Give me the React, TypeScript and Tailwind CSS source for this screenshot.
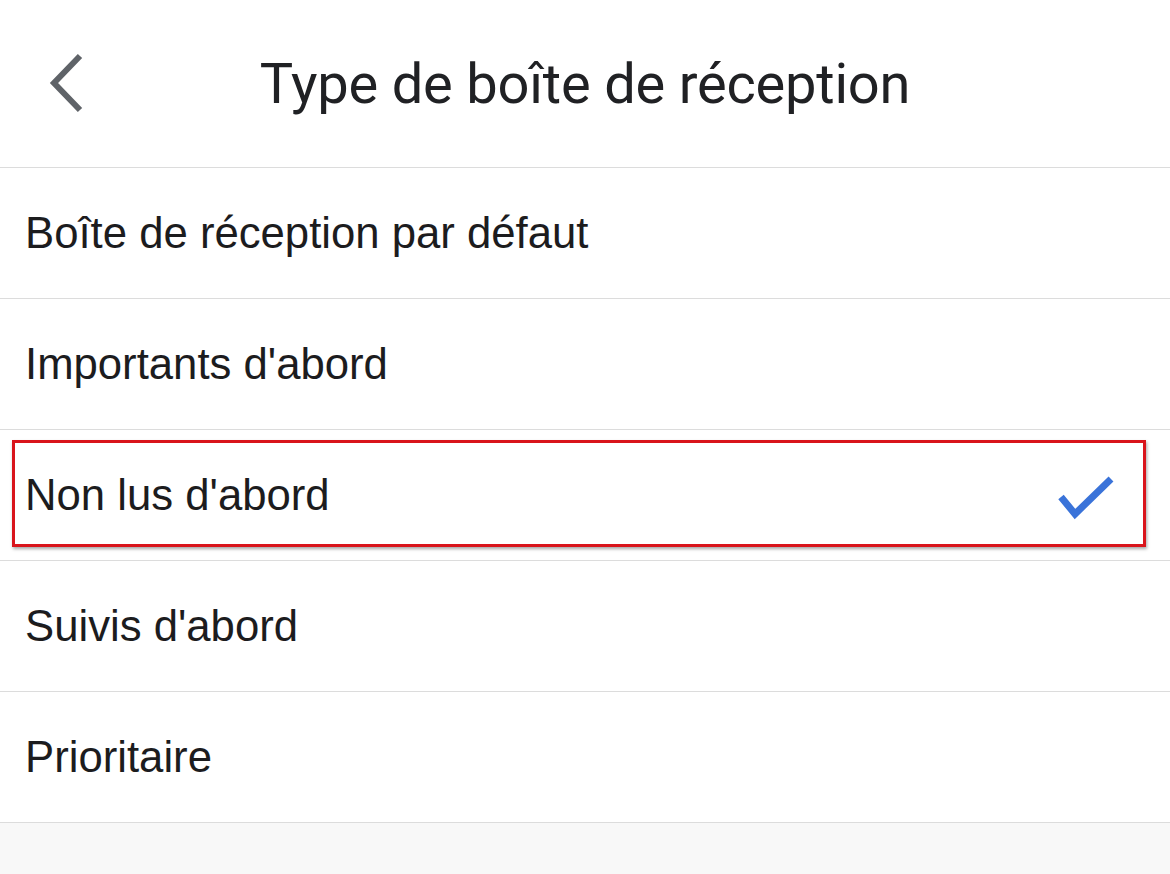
import React from "react";

const options = [
  "Boîte de réception par défaut",
  "Importants d'abord",
  "Non lus d'abord",
  "Suivis d'abord",
  "Prioritaire",
];

export default function App() {
  const selected = 2;

  return (
    <div className="w-[1170px] h-[874px] bg-[#f8f8f8] overflow-hidden">
      <div className="bg-white">
        <header className="relative h-[168px] flex items-center justify-center border-b border-[#dcdcdc]">
          <button className="absolute left-[44px] top-[50px] w-[44px] h-[66px] flex items-center justify-center">
            <svg width="40" height="62" viewBox="0 0 40 62" fill="none">
              <path d="M34 4 L8 31 L34 58" stroke="#5f6368" strokeWidth="6" />
            </svg>
          </button>
          <h1 className="text-[56px] text-[#202124] font-['Roboto',sans-serif] tracking-[-0.2px] leading-none">
            Type de boîte de réception
          </h1>
        </header>

        {options.map((label, i) => (
          <div
            key={label}
            className="relative h-[131px] flex items-center justify-between pl-[25px] pr-[55px] border-b border-[#dcdcdc]"
          >
            <span className="text-[43.7px] text-[#1c1c1e] font-['Liberation_Sans',Arial,sans-serif] leading-none">
              {label}
            </span>
            {i === selected && (
              <>
                <svg width="58" height="46" viewBox="0 0 58 46" fill="none" className="mt-[6px]">
                  <path d="M4 22 L18 39 L54 4" stroke="#3a73d9" strokeWidth="7" />
                </svg>
                <div className="absolute left-[12px] right-[24px] top-[10px] bottom-[13px] border-[3px] border-[#d9141b] shadow-[1px_2px_3px_rgba(0,0,0,0.35)] pointer-events-none" />
              </>
            )}
          </div>
        ))}
      </div>
    </div>
  );
}
